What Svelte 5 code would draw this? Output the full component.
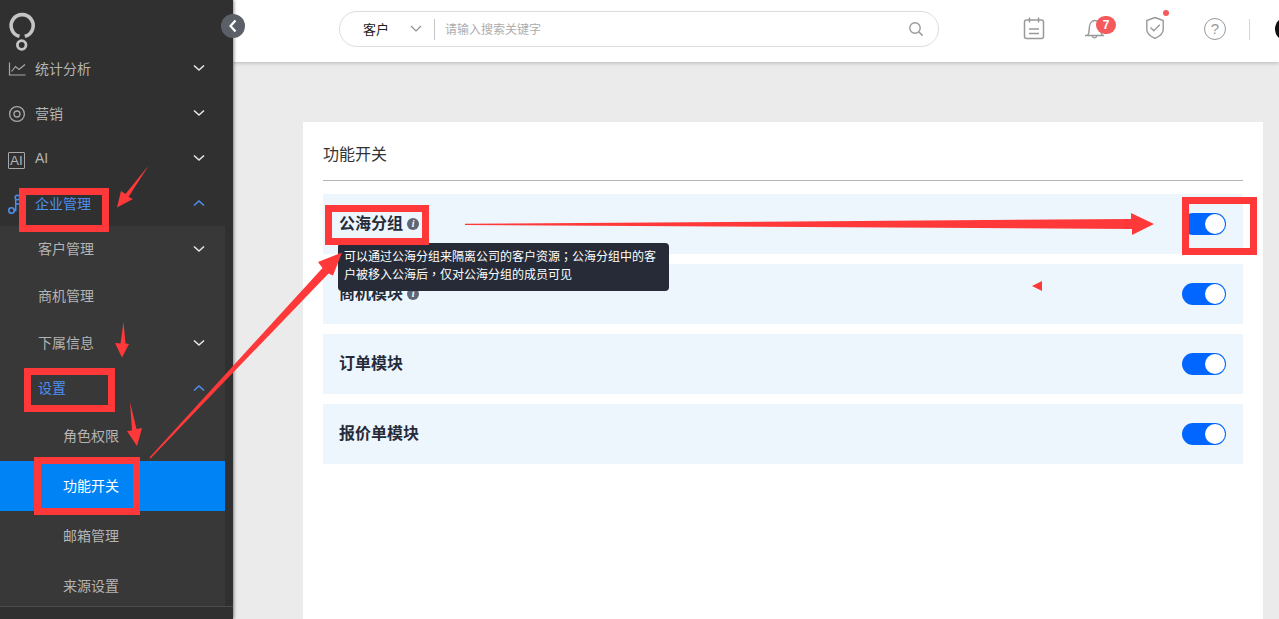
<script>
  const toggles = [
    { name: '公海分组', info: true },
    { name: '商机模块', info: true },
    { name: '订单模块', info: false },
    { name: '报价单模块', info: false }
  ];
  const subs = [
    { name: '客户管理', chev: 'down', cls: 'l2' },
    { name: '商机管理', chev: '', cls: 'l2' },
    { name: '下属信息', chev: 'down', cls: 'l2' },
    { name: '设置', chev: 'up', cls: 'l2s' }
  ];
  const leaves = ['角色权限', '功能开关', '邮箱管理', '来源设置'];
  const rects = [
    [22.5, 191.5, 83, 37],
    [27.5, 371.5, 84, 37],
    [37.5, 460.5, 99, 51],
    [328.5, 208.5, 97, 33],
    [1185.5, 200.5, 68, 51]
  ];
</script>

<div class="app">
  <aside class="side">
    <div class="logo">
      <svg width="44" height="62" viewBox="0 0 44 62">
        <path d="M19.5 36.3A11 11 0 1 1 24.8 36.3" fill="none" stroke="#c4c4c4" stroke-width="3.6" />
        <circle cx="21.7" cy="45" r="4.3" fill="none" stroke="#c4c4c4" stroke-width="2.8" />
      </svg>
    </div>
    <nav class="menu">
      <div class="list">
        <div class="item">
          <svg class="ico" width="18" height="15" viewBox="0 0 18 15"><path d="M1.5 1v12.5H17.5M3.5 10l4-5 3.5 3 6-5" fill="none" stroke="#a8a8a8" stroke-width="1.2" /></svg>
          <span>统计分析</span>
          <svg class="chev" width="12" height="8" viewBox="0 0 12 8"><path d="M1 1.5l5 4.5 5-4.5" fill="none" stroke="#e6e6e6" stroke-width="1.6" /></svg>
        </div>
        <div class="item">
          <svg class="ico" width="18" height="18" viewBox="0 0 18 18"><circle cx="9" cy="9" r="7.4" fill="none" stroke="#a8a8a8" stroke-width="1.3" /><circle cx="9" cy="9" r="3" fill="none" stroke="#a8a8a8" stroke-width="1.3" /></svg>
          <span>营销</span>
          <svg class="chev" width="12" height="8" viewBox="0 0 12 8"><path d="M1 1.5l5 4.5 5-4.5" fill="none" stroke="#e6e6e6" stroke-width="1.6" /></svg>
        </div>
        <div class="item">
          <b class="aibox">AI</b>
          <span>AI</span>
          <svg class="chev" width="12" height="8" viewBox="0 0 12 8"><path d="M1 1.5l5 4.5 5-4.5" fill="none" stroke="#e6e6e6" stroke-width="1.6" /></svg>
        </div>
        <div class="item on">
          <svg class="ico" width="18" height="20" viewBox="0 0 18 20"><circle cx="3.5" cy="16.500" r="2.700" fill="none" stroke="#4d8ff0" stroke-width="1.6" /><circle cx="9.500" cy="3.500" r="2.300" fill="none" stroke="#4d8ff0" stroke-width="1.5" /><path d="M6.200 16.500h1.500V5.500M8 10h7" fill="none" stroke="#4d8ff0" stroke-width="1.5" /></svg>
          <span>企业管理</span>
          <svg class="chev" width="12" height="8" viewBox="0 0 12 8"><path d="M1 6.500l5-4.500 5 4.500" fill="none" stroke="#4d8ff0" stroke-width="1.6" /></svg>
        </div>
        <div class="panel">
          {#each subs as s}
            <div class="sub {s.cls}" class:on={s.chev === 'up'}>
              <span>{s.name}</span>
              {#if s.chev === 'down'}
                <svg class="chev" width="12" height="8" viewBox="0 0 12 8"><path d="M1 1.500l5 4.500 5-4.500" fill="none" stroke="#e6e6e6" stroke-width="1.6" /></svg>
              {:else if s.chev === 'up'}
                <svg class="chev" width="12" height="8" viewBox="0 0 12 8"><path d="M1 6.500l5-4.500 5 4.500" fill="none" stroke="#4d8ff0" stroke-width="1.6" /></svg>
              {/if}
            </div>
          {/each}
          {#each leaves as l}
            <div class="leaf" class:active={l === '功能开关'}>{l}</div>
          {/each}
        </div>
      </div>
    </nav>
    <div class="foot"></div>
  </aside>

  <main class="main">
    <header class="top">
      <div class="search">
        <span class="scope">客户</span>
        <svg class="scope-chev" width="12" height="8" viewBox="0 0 12 8"><path d="M1 1l5 5 5-5" fill="none" stroke="#8f8f8f" stroke-width="1.2" /></svg>
        <i class="sep"></i>
        <span class="ph">请输入搜索关键字</span>
        <svg class="mag" width="16" height="16" viewBox="0 0 16 16"><circle cx="7" cy="7" r="5.200" fill="none" stroke="#999" stroke-width="1.4" /><path d="M11 11l3.600 3.600" stroke="#999" stroke-width="1.5" /></svg>
      </div>
      <div class="tools">
        <svg class="t-cal" width="22" height="24" viewBox="0 0 22 24" fill="none" stroke="#999" stroke-width="1.500"><rect x="1.500" y="3" width="19" height="18.500" rx="2" /><path d="M6.500 0.500v5M15.500 0.500v5M6 12h10M6 16.500h10" /></svg>
        <div class="bell">
          <svg width="22" height="24" viewBox="0 0 22 24" fill="none" stroke="#999" stroke-width="1.4"><path d="M1 19.500h19M3.500 19.500c2-2 1.600-5 1.800-8 .3-4 2.600-7 5.700-7s5.400 3 5.700 7c.2 3-.2 6 1.800 8" /><path d="M8 20a2.700 2.700 0 0 0 5 0" /></svg>
          <b class="badge">7</b>
        </div>
        <div class="shield">
          <svg width="20" height="24" viewBox="0 0 20 24" fill="none" stroke="#999" stroke-width="1.4"><path d="M10 1.500l8.200 3v9.200c0 3.500-3.800 6.600-8.200 8.600-4.400-2-8.200-5.100-8.200-8.600V4.500z" /><path d="M5.500 11.500l3.300 3.300 6-6" /></svg>
          <i class="dot"></i>
        </div>
        <div class="help">?</div>
        <i class="vline"></i>
        <i class="avatar"></i>
      </div>
    </header>

    <section class="body">
      <div class="card">
        <h1 class="title">功能开关</h1>
        <div class="rows">
          {#each toggles as t, i}
            <div class="row">
              <strong>{t.name}</strong>
              {#if t.info}<i class="info">i</i>{/if}
              <span class="switch"><i></i></span>
              {#if i === 0}
                <div class="tip">可以通过公海分组来隔离公司的客户资源<span class="punc">；</span>公海分组中的客户被移入公海后<span class="punc">，</span>仅对公海分组的成员可见</div>
              {/if}
            </div>
          {/each}
        </div>
      </div>
    </section>
  </main>

  <button class="collapse" aria-label="收起">
    <svg width="10" height="14" viewBox="0 0 10 14"><path d="M7.500 1.500L2.500 7l5 5.500" fill="none" stroke="#fff" stroke-width="2.200" /></svg>
  </button>

  <svg class="marks" width="1279" height="619" viewBox="0 0 1279 619">
    {#each rects as r}
      <rect x={r[0]} y={r[1]} width={r[2]} height={r[3]} fill="none" stroke="#ff3939" stroke-width="7" />
    {/each}
    <polygon fill="#ff3939" points="149,165 128.500,197 133,199 117,207.500 121,191 125.500,194" />
    <polygon fill="#ff3939" points="123.500,322 125.500,343.500 129,344 122,357.500 115,343 120.500,343.500" />
    <polygon fill="#ff3939" points="130,402 136.500,429 142,428 137,446 127,431 132,430.500" />
    <polygon fill="#ff3939" points="149.500,457.500 322.500,268 318,262 342,252.500 333,275.500 328.500,273.500 150.500,458.500" />
    <polygon fill="#ff3939" points="465,223.800 1131,219 1131,213 1154,224 1132,235 1132,229 465,225" />
    <polygon fill="#ff3939" points="1032,286 1042,281 1042,291" />
  </svg>
</div>

<style>
  :global(html), :global(body) { margin: 0; height: 100%; overflow: hidden; }
  .app {
    position: relative;
    display: flex;
    width: 100vw;
    height: 100vh;
    overflow: hidden;
    background: #ebebeb;
    font-family: "Liberation Sans", "Noto Sans CJK SC", sans-serif;
    font-size: 14px;
  }
  .side {
    flex: 0 0 233px;
    display: flex;
    flex-direction: column;
    background: #303030;
    color: #b4b4b4;
    box-shadow: 1px 0 3px rgba(0,0,0,.45);
    z-index: 2;
  }
  .logo { height: 62px; flex: none; position: relative; z-index: 1; background: #303030; }
  .logo svg { display: block; }
  .menu { flex: 1; min-height: 0; overflow: hidden; }
  .list { margin-top: -15.5px; }
  .item {
    height: 45px;
    display: flex;
    align-items: center;
    position: relative;
    padding-left: 35px;
  }
  .item span { margin-bottom: 2px; }
  .item.on, .sub.on { color: #4d8ff0; }
  .ico { position: absolute; left: 8px; top: 50%; transform: translateY(-50%); }
  .aibox {
    position: absolute;
    left: 8px;
    top: 15px;
    width: 15px;
    height: 15px;
    border: 1px solid #a8a8a8;
    border-radius: 1px;
    font: 400 13.500px/15px "Liberation Sans", sans-serif;
    text-align: center;
  }
  .chev { position: absolute; left: 193px; top: 50%; margin-top: -5px; }
  .panel { width: 225px; background: #383838; margin-top: -0.500px; }
  .sub {
    height: 47px;
    display: flex;
    align-items: center;
    position: relative;
    padding-left: 38px;
  }
  .sub span { margin-bottom: 4px; }
  .l2s { height: 44px; }
  .leaf {
    height: 50px;
    box-sizing: border-box;
    padding: 0 0 2px 63px;
    display: flex;
    align-items: center;
  }
  .leaf.active { background: #0084f5; color: #fff; }
  .foot { height: 12px; flex: none; border-top: 1px solid #4c4c4c; background: #303030; }

  .main { flex: 1; min-width: 0; display: flex; flex-direction: column; }
  .top {
    height: 62px;
    flex: none;
    background: #fff;
    box-shadow: 0 1px 4px rgba(0,0,0,.22);
    display: flex;
    align-items: flex-start;
    padding: 11px 0 0 106px;
    box-sizing: border-box;
    position: relative;
    z-index: 1;
  }
  .search {
    width: 600px;
    height: 36px;
    box-sizing: border-box;
    border: 1px solid #dcdcdc;
    border-radius: 18px;
    display: flex;
    align-items: center;
    padding-left: 23px;
    flex: none;
  }
  .scope { font-size: 13px; color: #222; width: 47px; margin-bottom: 2px; }
  .scope-chev { flex: none; }
  .sep { width: 1px; height: 21px; background: #c4c4c4; margin: 0 10px 0 12px; flex: none; }
  .ph { font-size: 12px; color: #adadad; flex: 1; margin-bottom: 2px; }
  .mag { margin-right: 14px; flex: none; }
  .tools { position: relative; display: flex; align-items: center; height: 36px; padding-left: 84px; flex: 1; }
  .t-cal { flex: none; }
  .bell { position: relative; width: 22px; height: 24px; margin: -2px 0 0 39px; flex: none; }
  .bell svg, .shield svg { display: block; }
  .badge {
    position: absolute;
    left: 12px;
    top: 0;
    width: 20px;
    height: 18px;
    border-radius: 9px;
    background: #f4595c;
    color: #fff;
    font: 700 12px/18px "Liberation Sans", sans-serif;
    text-align: center;
  }
  .shield { position: relative; width: 20px; height: 24px; margin-left: 39px; flex: none; margin-top: -2px; }
  .dot { position: absolute; right: -4px; top: -6px; width: 6px; height: 6px; border-radius: 50%; background: #f4595c; }
  .help {
    width: 20px;
    height: 20px;
    margin-left: 39px;
    flex: none;
    border: 1.500px solid #999;
    border-radius: 50%;
    color: #999;
    font: 400 15px/20px "Liberation Sans", sans-serif;
    text-align: center;
  }
  .vline { width: 1px; height: 21px; background: #d6d6d6; margin-left: 23px; flex: none; }
  .avatar { width: 24px; height: 24px; border-radius: 50%; background: #111; margin-left: 25px; flex: none; }

  .body { flex: 1; min-height: 0; padding: 60px 16px 0 70px; }
  .card { height: 100%; background: #fff; padding: 0 20px; box-sizing: border-box; }
  .title {
    margin: 0;
    height: 59px;
    box-sizing: border-box;
    border-bottom: 1px solid #b4b4b4;
    font-size: 16px;
    font-weight: 400;
    line-height: 66px;
    color: #333;
  }
  .rows { padding-top: 13px; display: flex; flex-direction: column; gap: 10px; }
  .row {
    position: relative;
    height: 60px;
    background: #edf5fd;
    display: flex;
    align-items: center;
    padding: 0 17px 0 16px;
  }
  .row strong { font-size: 16px; font-weight: 700; color: #262b37; margin-bottom: 4px; }
  .info {
    width: 12px;
    height: 12px;
    margin-left: 4px;
    border-radius: 50%;
    background: #5f6675;
    color: #fff;
    font: italic 700 10px/12px "Liberation Serif", serif;
    text-align: center;
  }
  .switch {
    margin-left: auto;
    width: 44px;
    height: 22px;
    border-radius: 11px;
    background: #0066ff;
    position: relative;
    flex: none;
  }
  .switch i {
    position: absolute;
    right: 1px;
    top: 1px;
    width: 20px;
    height: 20px;
    border-radius: 50%;
    background: #fff;
  }
  .tip {
    position: absolute;
    left: 15px;
    top: 49px;
    width: 331px;
    height: 48px;
    box-sizing: border-box;
    padding: 5px 6px;
    background: #262b37;
    border-radius: 4px;
    color: #fff;
    font-size: 12px;
    line-height: 18px;
    z-index: 1;
  }
  .punc { font-family: "Noto Sans CJK TC", sans-serif; line-height: 0; }
  .collapse {
    position: absolute;
    left: 221px;
    top: 14px;
    width: 24px;
    height: 24px;
    padding: 0;
    border: 0;
    border-radius: 50%;
    background: #5b6068;
    display: flex;
    align-items: center;
    justify-content: center;
    z-index: 3;
  }
  .marks { position: absolute; left: 0; top: 0; z-index: 4; pointer-events: none; }
</style>
